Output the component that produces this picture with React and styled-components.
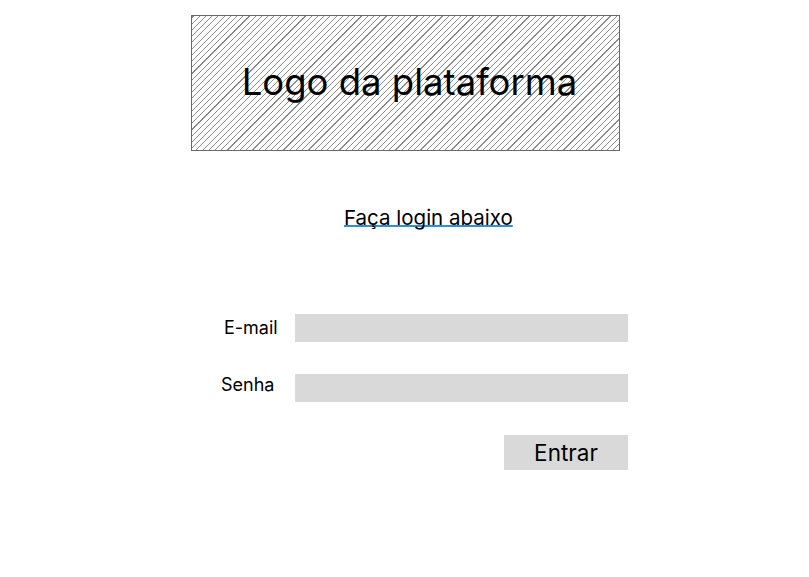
import React from "react";
import styled, { createGlobalStyle } from "styled-components";

const Global = createGlobalStyle`
  html, body { margin: 0; padding: 0; background: #ffffff; }
  body { font-family: Inter, "Noto Sans", sans-serif; color: #000; }
`;

const Page = styled.div`
  width: 809px;
  height: 577px;
  display: flex;
  flex-direction: column;
  padding-top: 15px;
  box-sizing: border-box;
`;

const LogoBox = styled.div`
  align-self: center;
  margin-left: 2px;
  width: 429px;
  height: 136px;
  box-sizing: border-box;
  border: 1px solid #6a6a6a;
  background: repeating-linear-gradient(
    -45deg,
    #ffffff 0px,
    #ffffff 3.6px,
    #8c8c8c 3.6px,
    #8c8c8c 4.4px
  );
  display: flex;
  align-items: center;
  justify-content: center;
`;

const LogoText = styled.span`
  font-size: 36.5px;
  line-height: 1;
  padding-left: 8px;
  padding-bottom: 2px;
`;

const HeadingRow = styled.div`
  padding-left: 344px;
  margin-top: 55px;
  height: 30px;
`;

const HeadingLink = styled.span`
  font-size: 20.5px;
  line-height: 24px;
  text-decoration: underline;
  text-decoration-color: #2b8fdc;
  text-decoration-thickness: 2px;
  text-decoration-skip-ink: none;
  text-underline-offset: 0px;
`;

const Form = styled.div`
  margin-top: 78px;
  padding-left: 221px;
  display: grid;
  grid-template-columns: 74px 333px;
  row-gap: 32px;
  align-items: center;
`;

const Label = styled.label`
  font-size: 18px;
  line-height: 20px;
  padding-left: ${(p) => p.$indent || 0}px;
  margin-top: ${(p) => p.$shift || 0}px;
`;

const Field = styled.div`
  height: 28px;
  background: #d9d9d9;
`;

const Actions = styled.div`
  grid-column: 2;
  display: flex;
  justify-content: flex-end;
  margin-top: 1px;
`;

const Button = styled.button`
  width: 124px;
  height: 35px;
  border: none;
  background: #d9d9d9;
  font-family: Inter, "Noto Sans", sans-serif;
  font-size: 22.5px;
  color: #000;
  padding: 0;
`;

export default function App() {
  return (
    <>
      <Global />
      <Page>
        <LogoBox>
          <LogoText>Logo da plataforma</LogoText>
        </LogoBox>
        <HeadingRow>
          <HeadingLink>Faça login abaixo</HeadingLink>
        </HeadingRow>
        <Form>
          <Label $indent={3}>E-mail</Label>
          <Field />
          <Label $shift={-6}>Senha</Label>
          <Field />
          <Actions>
            <Button>Entrar</Button>
          </Actions>
        </Form>
      </Page>
    </>
  );
}
